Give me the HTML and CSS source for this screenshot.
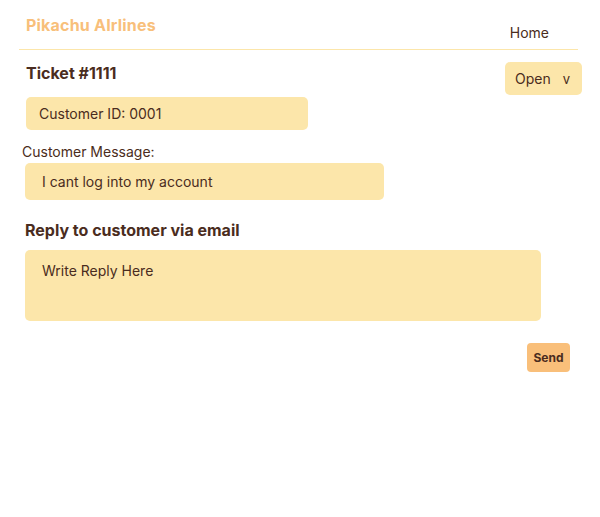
FILE: index.html
```html
<!DOCTYPE html>
<html>
<head>
<meta charset="utf-8">
<link rel="stylesheet" href="styles.css">
</head>
<body>
<header class="nav">
  <div class="logo">Pikachu AIrlines</div>
  <div class="home">Home</div>
</header>
<main class="ticket">
  <div class="ticket-head">
    <h1 class="title">Ticket #1111</h1>
    <div class="status">Open <span class="caret">v</span></div>
  </div>
  <div class="box cust-id">Customer ID: 0001</div>
  <div class="label">Customer Message:</div>
  <div class="box message">I cant log into my account</div>
  <h2 class="reply-title">Reply to customer via email</h2>
  <div class="box reply">Write Reply Here</div>
  <div class="actions"><button class="send">Send</button></div>
</main>
</body>
</html>
```
FILE: styles.css
```css
* { box-sizing: border-box; }
body {
  margin: 0;
  font-family: Inter, "Noto Sans", sans-serif;
  color: #4a2c20;
  background: #fff;
}
.nav {
  display: flex;
  justify-content: space-between;
  margin: 0 22px 0 19px;
  padding: 16px 0 0 7px;
  height: 50px;
  border-bottom: 1px solid #fce6aa;
}
.logo {
  color: #f8bf7b;
  font-weight: 700;
  font-size: 16px;
  line-height: 19px;
  letter-spacing: 0.2px;
}
.home {
  font-size: 14px;
  line-height: 17px;
  margin-top: 8px;
  margin-right: 29px;
  color: #4a2c20;
}
.ticket {
  padding: 0 18px 0 25px;
}
.ticket-head {
  display: flex;
  justify-content: space-between;
  align-items: flex-start;
  margin-top: 12px;
}
.title {
  margin: 1px 0 0 1px;
  font-size: 16px;
  font-weight: 700;
  line-height: 20px;
  font-variant-numeric: proportional-nums;
}
.status {
  background: #fce6aa;
  border-radius: 5px;
  width: 77px;
  height: 33px;
  display: flex;
  align-items: center;
  padding-left: 10px;
  font-size: 14px;
}
.caret {
  margin-left: 12px;
  font-size: 13px;
}
.box {
  background: #fce6aa;
  border-radius: 5px;
  font-size: 14px;
}
.cust-id {
  margin: 2px 0 0 1px;
  width: 282px;
  height: 33px;
  padding: 8px 13px;
  line-height: 17px;
}
.label {
  margin: 13px 0 0 -3px;
  font-size: 14px;
  line-height: 17px;
}
.message {
  margin-top: 3px;
  width: 359px;
  height: 37px;
  padding: 10px 17px;
  line-height: 17px;
}
.reply-title {
  margin: 20px 0 0 0;
  font-size: 16px;
  font-weight: 700;
  line-height: 20px;
}
.reply {
  margin-top: 10px;
  width: 516px;
  height: 71px;
  padding: 12px 17px;
  line-height: 17px;
}
.actions {
  display: flex;
  justify-content: flex-end;
  margin-top: 22px;
  padding-right: 12px;
}
.send {
  background: #f9bf7a;
  border: none;
  border-radius: 4px;
  width: 43px;
  height: 29px;
  padding: 0;
  font-family: Inter, sans-serif;
  font-weight: 700;
  font-size: 12px;
  color: #4a2c20;
}
```
